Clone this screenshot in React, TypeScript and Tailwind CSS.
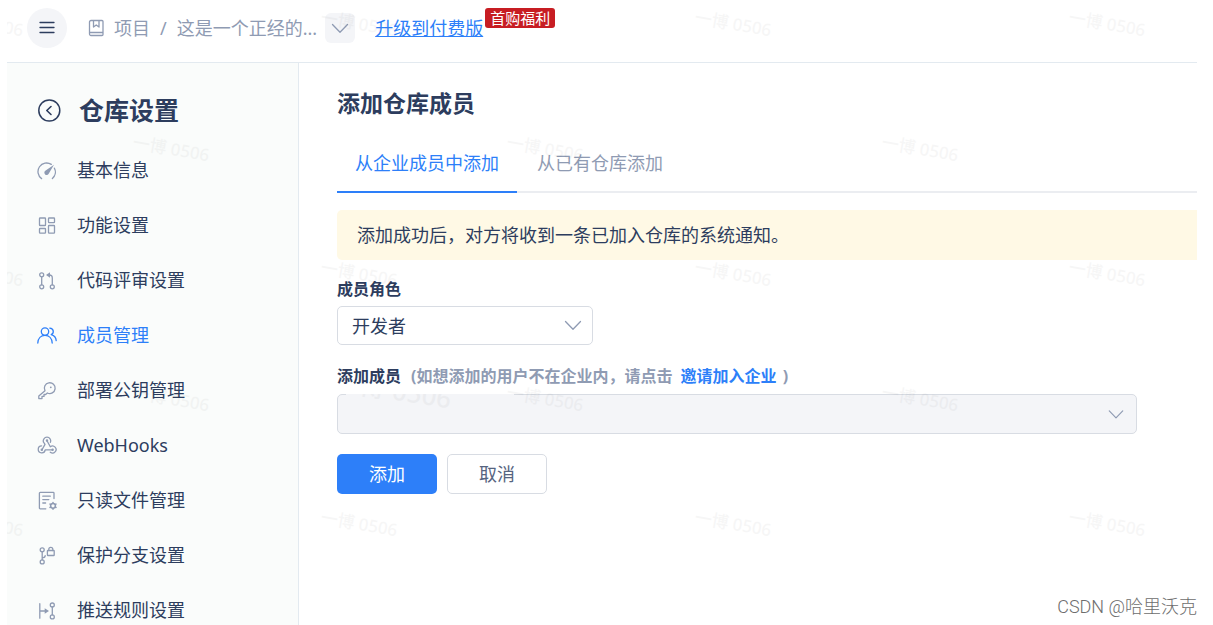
import React from "react";
import clsx from "clsx";

const FONT =
  "font-['Noto_Sans','Noto_Sans_CJK_SC',sans-serif] text-lg font-normal text-[#2d3d5e]";

interface IconProps {
  size?: number;
  className?: string;
  children: React.ReactNode;
}

function Icon({ size = 20, className, children }: IconProps) {
  return (
    <svg
      width={size}
      height={size}
      viewBox={`0 0 ${size} ${size}`}
      fill="none"
      stroke="currentColor"
      strokeWidth="1.3"
      strokeLinecap="round"
      strokeLinejoin="round"
      className={clsx("shrink-0", className)}
      aria-hidden="true"
    >
      {children}
    </svg>
  );
}

function ChevronDown({ className }: { className?: string }) {
  return (
    <Icon className={className}>
      <path d="M2.5 6.5 10 14.3 17.5 6.5" />
    </Icon>
  );
}

const MENUS = [
  {
    label: "基本信息",
    icon: (
      <>
        <path d="M4.6 18.6A8.6 8.6 0 0 1 14.3 4.4M17.4 8.2a8.6 8.6 0 0 1-2 10.4" />
        <path d="M17 4.8 8.3 10.8a2.3 2.3 0 1 0 3.4 2.9Z" fill="currentColor" stroke="none" />
      </>
    ),
  },
  {
    label: "功能设置",
    icon: (
      <>
        <rect x="2.5" y="3" width="6" height="7.5" rx=".6" />
        <rect x="11.5" y="3" width="6" height="4.6" rx=".6" />
        <rect x="2.5" y="13.5" width="6" height="4.6" rx=".6" />
        <rect x="11.5" y="10.5" width="6" height="7.6" rx=".6" />
      </>
    ),
  },
  {
    label: "代码评审设置",
    icon: (
      <>
        <circle cx="4.7" cy="4.8" r="2" />
        <circle cx="4.7" cy="16.8" r="2" />
        <circle cx="15.3" cy="16.8" r="2" />
        <path d="M4.7 6.8v8M15.3 14.8V8q0-3-3-3H11" />
        <path d="M13 2.3v5.4L9 5Z" fill="currentColor" stroke="none" />
      </>
    ),
  },
  {
    label: "成员管理",
    active: true,
    icon: (
      <>
        <circle cx="8" cy="6.6" r="3.7" />
        <path d="M.8 18C1 13.2 4 10.3 8 10.3s7 2.9 7.2 7.7" />
        <path d="M12.8 3.1c4.1.2 4.6 5.2 1.4 6.5 3 .8 4.8 3 5 6" />
      </>
    ),
  },
  {
    label: "部署公钥管理",
    icon: (
      <>
        <path d="M8 10.7A5.4 5.4 0 1 1 10.4 13L8.6 14.5H7v1.9H5v2.2H1.8V16Z" />
        <circle cx="13.8" cy="7.3" r=".9" fill="currentColor" stroke="none" />
      </>
    ),
  },
  {
    label: "WebHooks",
    icon: (
      <>
        <path d="M6.5 7.2a3.7 3.7 0 1 1 6.9.1M10 5.7l3.3 6.1a3.5 3.5 0 1 1 0 5.4" />
        <path d="M6.8 7.5 8 9.4 5 14.8M15.5 14.8H8.2a3.5 3.5 0 1 1-3.6-4" />
        <circle cx="10" cy="5.6" r=".6" fill="currentColor" />
        <circle cx="4.8" cy="14.8" r=".6" fill="currentColor" />
        <circle cx="15.6" cy="14.8" r=".6" fill="currentColor" />
      </>
    ),
  },
  {
    label: "只读文件管理",
    icon: (
      <>
        <path d="M8.8 18.8H3.2a.8.8 0 0 1-.8-.8V3.2a.8.8 0 0 1 .8-.8h13a.8.8 0 0 1 .8.8v5.4" />
        <path d="M5.8 6.2h7.5M5.8 9.6h6M5.8 13h2.8" />
        <circle cx="16" cy="15.8" r="2.4" strokeWidth="1.5" />
        <path d="M16 12.4v.6M16 18.6v.6M13 14.1l.6.3M18.4 17.2l.6.3M13 17.5l.6-.3M18.4 14.4l.6-.3" strokeWidth="1.5" />
      </>
    ),
  },
  {
    label: "保护分支设置",
    icon: (
      <>
        <circle cx="5.2" cy="4.8" r="2" />
        <circle cx="5.2" cy="16.9" r="2" />
        <path d="M5.2 6.8v8.1M5.2 12.7q2.8.2 3-2.1" />
        <rect x="10.4" y="5.5" width="6.8" height="5" rx=".6" />
        <path d="M11.8 5.5V4.3a2 2 0 0 1 4 0v1.2" />
      </>
    ),
  },
  {
    label: "推送规则设置",
    icon: (
      <>
        <path d="M2.8 3.7v14.5M2.8 11H8" />
        <path d="m7.7 8.2 4.3 2.8-4.3 2.8Z" fill="currentColor" stroke="none" />
        <circle cx="15.3" cy="5" r="2" />
        <circle cx="15.3" cy="16.9" r="2" />
        <path d="M15.3 7v7.9" />
      </>
    ),
  },
];

const WATERMARK_ROWS = [
  { y: 23, xs: [-61, 313, 687, 1061] },
  { y: 148, xs: [125, 499, 874] },
  { y: 273, xs: [-61, 313, 687, 1061] },
  { y: 398, xs: [125, 499, 874] },
  { y: 523, xs: [-61, 313, 687, 1061] },
];

function Watermark() {
  return (
    <svg
      className="pointer-events-none absolute inset-0 h-full w-full fill-black text-[17px] font-medium opacity-3"
      aria-hidden="true"
    >
      {WATERMARK_ROWS.map((row) =>
        row.xs.map((x) => (
          <text key={`${x}-${row.y}`} transform={`translate(${x} ${row.y}) rotate(10)`}>
            一博 0506
          </text>
        ))
      )}
    </svg>
  );
}

function Header() {
  return (
    <header className="flex h-[63px] shrink-0 items-start border-b border-[#e3eaf0] pt-2 pl-5 text-[#8f9bb3]">
      <button
        type="button"
        aria-label="菜单"
        className="flex size-10 items-center justify-center rounded-full bg-[#f4f5f8] text-[#2d3d5e]"
      >
        <Icon>
          <path d="M3 4.5h14M3 9.5h14M3 14.5h14" />
        </Icon>
      </button>
      <nav className="ml-5 flex h-10 items-center">
        <Icon className="mr-[7px]">
          <path d="M4 2.5h11a1 1 0 0 1 1 1v13a1 1 0 0 1-1 1H4A1.5 1.5 0 0 1 2.5 16V4A1.5 1.5 0 0 1 4 2.5ZM2.5 14.5H16M6.5 2.5V9l2.7-2L12 9V2.5" />
        </Icon>
        <a href="#projects">项目</a>
        <span className="mx-2.5">/</span>
        <a href="#repo">这是一个正经的...</a>
        <button
          type="button"
          aria-label="切换仓库"
          className="ml-2 flex size-[30px] items-center justify-center rounded-md bg-[#f4f5f8]"
        >
          <ChevronDown />
        </button>
      </nav>
      <a href="#upgrade" className="ml-5 leading-10 text-[#2d7ff9] underline">
        升级到付费版
      </a>
      <span className="ml-0.5 rounded-[3px] bg-[#c71d23] px-[5px] text-[15px] leading-5 text-white">
        首购福利
      </span>
    </header>
  );
}

function Sidebar() {
  return (
    <aside className="w-[292px] shrink-0 overflow-hidden border-r border-[#e3eaf0] bg-[#fafcfb]">
      <div className="flex items-center gap-[18px] pt-8 pb-[17px] pl-[30px]">
        <button type="button" aria-label="返回">
          <Icon size={24} className="block">
            <circle cx="12.3" cy="12.5" r="10.5" strokeWidth="1.5" />
            <path d="m14 8.5-4.2 4 4.2 4" strokeWidth="1.6" />
          </Icon>
        </button>
        <h2 className="text-[25px] leading-[30px] font-bold">仓库设置</h2>
      </div>
      <nav>
        {MENUS.map((menu) => (
          <a
            key={menu.label}
            href="#settings"
            className={clsx(
              "flex h-[55px] items-center gap-5 pl-[30px]",
              menu.active && "text-[#2d7ff9]"
            )}
          >
            <Icon className={menu.active ? "text-[#2d7ff9]" : "text-[#8f9bb3]"}>{menu.icon}</Icon>
            {menu.label}
          </a>
        ))}
      </nav>
    </aside>
  );
}

function MemberForm() {
  return (
    <form>
      <label htmlFor="role" className="mt-[17px] block text-base leading-6 font-bold">
        成员角色
      </label>
      <div className="relative mt-[5px] w-64">
        <select
          id="role"
          className="block h-[39px] w-full appearance-none rounded-[5px] border border-[#d8dce3] px-3.5"
        >
          <option>开发者</option>
        </select>
        <ChevronDown className="pointer-events-none absolute top-[9px] right-2.5 text-[#8f9bb3]" />
      </div>

      <p className="mt-[19px] text-base leading-6 font-bold text-[#8f9bb3]">
        <label htmlFor="member" className="text-[#2d3d5e]">
          添加成员
        </label>
        <span className="ml-2.5">(如想添加的用户不在企业内，请点击 </span>
        <a href="#invite" className="ml-1 text-[#2d7ff9]">
          邀请加入企业
        </a>
        <span className="ml-0.5"> )</span>
      </p>
      <div className="relative mt-1.5 max-w-[800px]">
        <select
          id="member"
          disabled
          className="block h-10 w-full appearance-none rounded-[5px] border border-[#d8dce3] bg-[#f4f5f8] px-3.5 opacity-100"
        />
        <svg
          className="pointer-events-none absolute top-0 left-0 h-10 w-[180px] text-[26px] font-medium"
          aria-hidden="true"
        >
          <path d="M9 0h168v1H9Z" className="fill-[#f4f5f8]" />
          <text transform="translate(-4 -4) rotate(9)" className="fill-black opacity-3">
            一博 0506
          </text>
        </svg>
        <ChevronDown className="pointer-events-none absolute top-[11px] right-3 size-[18px] text-[#8f9bb3]" />
      </div>

      <div className="mt-5 flex gap-2.5">
        <button type="button" className="h-10 w-[100px] rounded-[5px] bg-[#2d7ff9] text-white">
          添加
        </button>
        <button
          type="button"
          className="h-10 w-[100px] rounded-[5px] border border-[#d8dce3] bg-white text-[#56647f]"
        >
          取消
        </button>
      </div>
    </form>
  );
}

function App() {
  return (
    <div className={clsx("h-screen bg-white pr-4 pl-[7px]", FONT)}>
      <div className="relative flex h-full flex-col overflow-hidden">
        <Header />
        <div className="flex min-h-0 flex-1">
          <Sidebar />
          <main className="min-w-0 flex-1 pt-6 pl-[38px]">
            <h1 className="text-[23px] leading-8 font-bold">添加仓库成员</h1>
            <div role="tablist" className="mt-4 flex border-b-2 border-[#ebedf1]">
              <button
                type="button"
                role="tab"
                aria-selected="true"
                className="-mb-0.5 w-[180px] border-b-2 border-[#2d7ff9] leading-[56px] text-[#2d7ff9]"
              >
                从企业成员中添加
              </button>
              <button
                type="button"
                role="tab"
                aria-selected="false"
                className="px-5 leading-[56px] text-[#8f9bb3]"
              >
                从已有仓库添加
              </button>
            </div>
            <p className="mt-[17px] rounded-l-[5px] bg-[#fff9e5] px-5 leading-[50px]">
              添加成功后，对方将收到一条已加入仓库的系统通知。
            </p>
            <MemberForm />
          </main>
        </div>
        <Watermark />
        <p className="absolute right-0 bottom-1 font-['Roboto','Noto_Sans_CJK_SC',sans-serif] leading-7 font-light text-[#6d6d6d]">
          CSDN @哈里沃克
        </p>
      </div>
    </div>
  );
}

export default App;
